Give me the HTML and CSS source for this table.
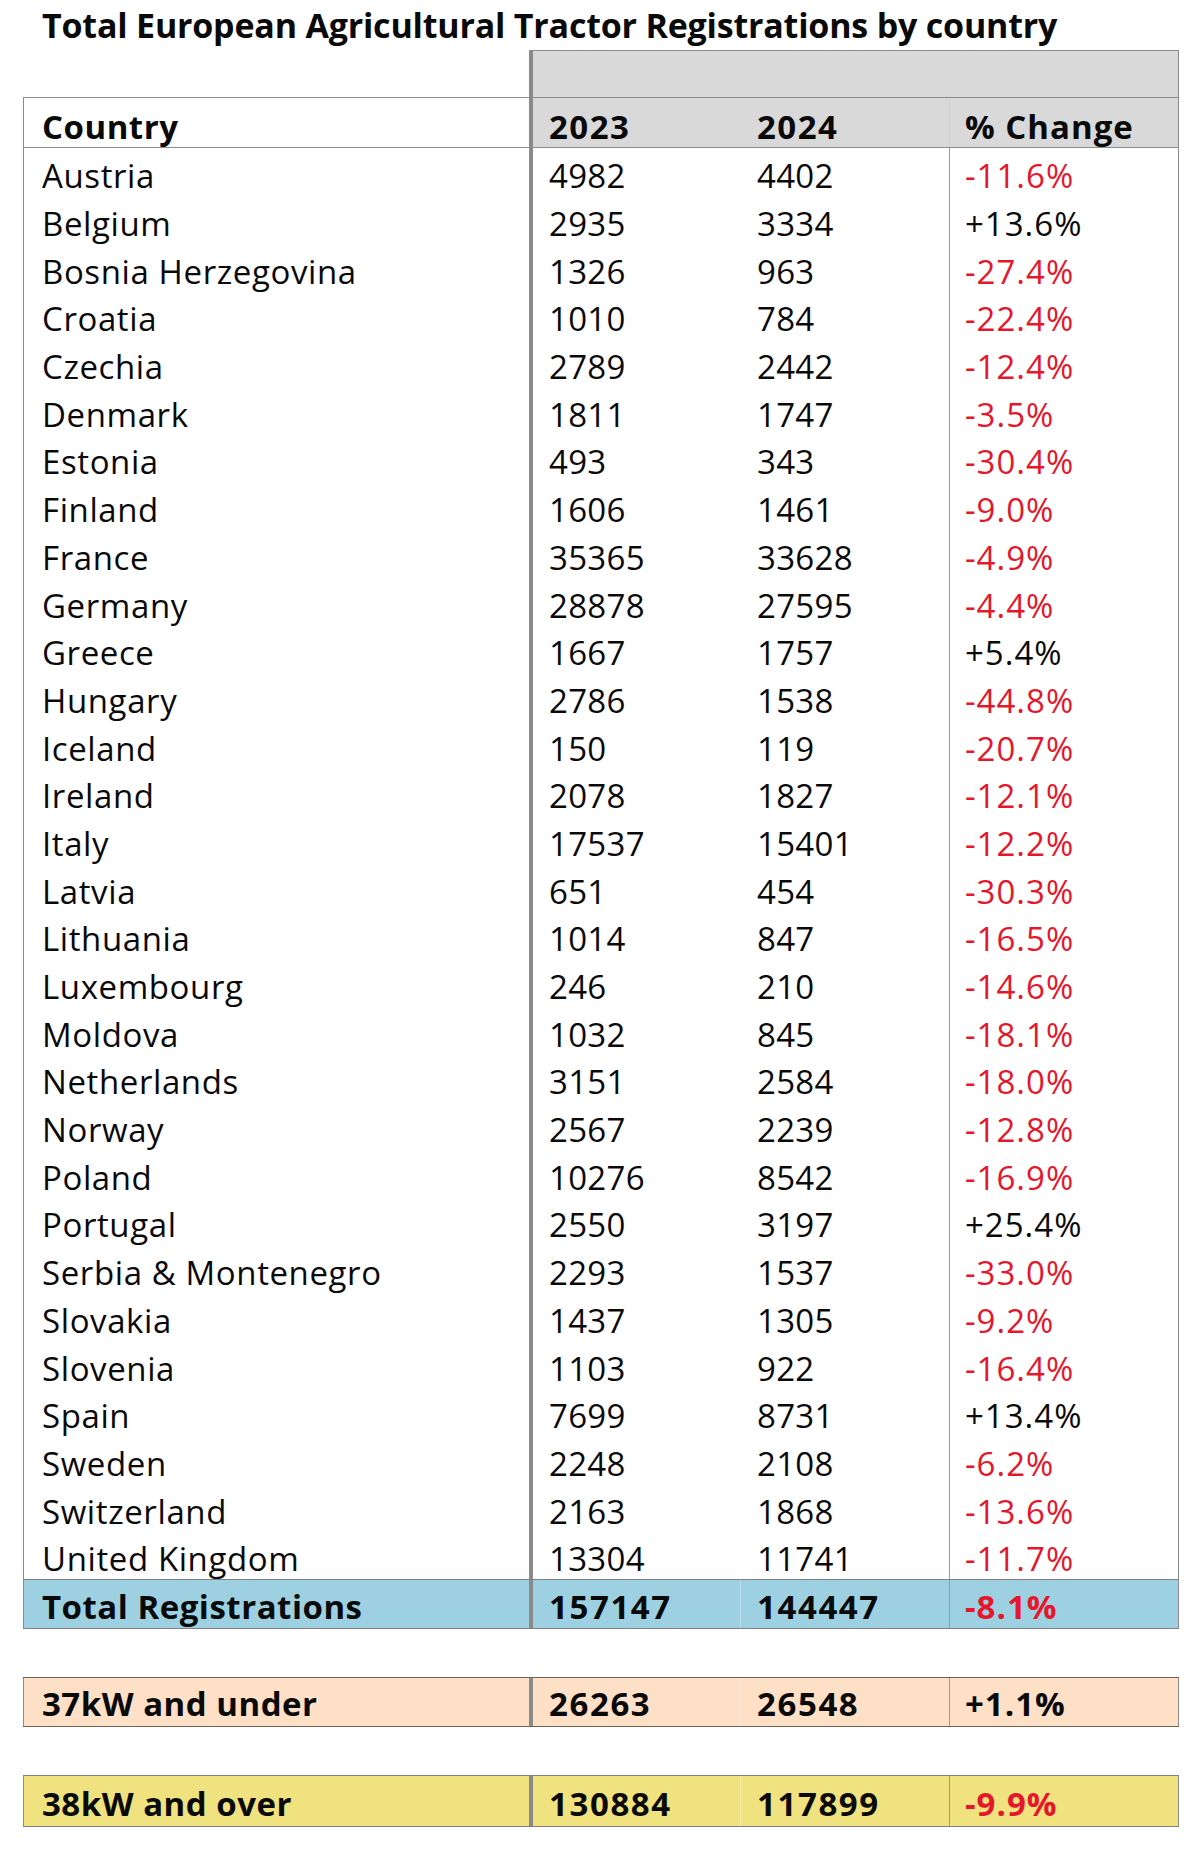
FILE: index.html
```html
<!DOCTYPE html>
<html lang="en">
<head>
<meta charset="utf-8">
<title>Total European Agricultural Tractor Registrations by country</title>
<link rel="stylesheet" href="styles.css">
</head>
<body>
<div class="page">
  <h1 class="title">Total European Agricultural Tractor Registrations by country</h1>
  <div class="table">
    <div class="row band">
      <div class="cell blank"></div>
      <div class="cell span3"></div>
    </div>
    <div class="row head">
      <div class="cell c1">Country</div>
      <div class="cell c2">2023</div>
      <div class="cell c3">2024</div>
      <div class="cell c4">% Change</div>
    </div>
    <div class="body">
      <div class="row data"><div class="cell c1">Austria</div><div class="cell c2">4982</div><div class="cell c3">4402</div><div class="cell c4 neg">-11.6%</div></div>
      <div class="row data"><div class="cell c1">Belgium</div><div class="cell c2">2935</div><div class="cell c3">3334</div><div class="cell c4">+13.6%</div></div>
      <div class="row data"><div class="cell c1">Bosnia Herzegovina</div><div class="cell c2">1326</div><div class="cell c3">963</div><div class="cell c4 neg">-27.4%</div></div>
      <div class="row data"><div class="cell c1">Croatia</div><div class="cell c2">1010</div><div class="cell c3">784</div><div class="cell c4 neg">-22.4%</div></div>
      <div class="row data"><div class="cell c1">Czechia</div><div class="cell c2">2789</div><div class="cell c3">2442</div><div class="cell c4 neg">-12.4%</div></div>
      <div class="row data"><div class="cell c1">Denmark</div><div class="cell c2">1811</div><div class="cell c3">1747</div><div class="cell c4 neg">-3.5%</div></div>
      <div class="row data"><div class="cell c1">Estonia</div><div class="cell c2">493</div><div class="cell c3">343</div><div class="cell c4 neg">-30.4%</div></div>
      <div class="row data"><div class="cell c1">Finland</div><div class="cell c2">1606</div><div class="cell c3">1461</div><div class="cell c4 neg">-9.0%</div></div>
      <div class="row data"><div class="cell c1">France</div><div class="cell c2">35365</div><div class="cell c3">33628</div><div class="cell c4 neg">-4.9%</div></div>
      <div class="row data"><div class="cell c1">Germany</div><div class="cell c2">28878</div><div class="cell c3">27595</div><div class="cell c4 neg">-4.4%</div></div>
      <div class="row data"><div class="cell c1">Greece</div><div class="cell c2">1667</div><div class="cell c3">1757</div><div class="cell c4">+5.4%</div></div>
      <div class="row data"><div class="cell c1">Hungary</div><div class="cell c2">2786</div><div class="cell c3">1538</div><div class="cell c4 neg">-44.8%</div></div>
      <div class="row data"><div class="cell c1">Iceland</div><div class="cell c2">150</div><div class="cell c3">119</div><div class="cell c4 neg">-20.7%</div></div>
      <div class="row data"><div class="cell c1">Ireland</div><div class="cell c2">2078</div><div class="cell c3">1827</div><div class="cell c4 neg">-12.1%</div></div>
      <div class="row data"><div class="cell c1">Italy</div><div class="cell c2">17537</div><div class="cell c3">15401</div><div class="cell c4 neg">-12.2%</div></div>
      <div class="row data"><div class="cell c1">Latvia</div><div class="cell c2">651</div><div class="cell c3">454</div><div class="cell c4 neg">-30.3%</div></div>
      <div class="row data"><div class="cell c1">Lithuania</div><div class="cell c2">1014</div><div class="cell c3">847</div><div class="cell c4 neg">-16.5%</div></div>
      <div class="row data"><div class="cell c1">Luxembourg</div><div class="cell c2">246</div><div class="cell c3">210</div><div class="cell c4 neg">-14.6%</div></div>
      <div class="row data"><div class="cell c1">Moldova</div><div class="cell c2">1032</div><div class="cell c3">845</div><div class="cell c4 neg">-18.1%</div></div>
      <div class="row data"><div class="cell c1">Netherlands</div><div class="cell c2">3151</div><div class="cell c3">2584</div><div class="cell c4 neg">-18.0%</div></div>
      <div class="row data"><div class="cell c1">Norway</div><div class="cell c2">2567</div><div class="cell c3">2239</div><div class="cell c4 neg">-12.8%</div></div>
      <div class="row data"><div class="cell c1">Poland</div><div class="cell c2">10276</div><div class="cell c3">8542</div><div class="cell c4 neg">-16.9%</div></div>
      <div class="row data"><div class="cell c1">Portugal</div><div class="cell c2">2550</div><div class="cell c3">3197</div><div class="cell c4">+25.4%</div></div>
      <div class="row data"><div class="cell c1">Serbia &amp; Montenegro</div><div class="cell c2">2293</div><div class="cell c3">1537</div><div class="cell c4 neg">-33.0%</div></div>
      <div class="row data"><div class="cell c1">Slovakia</div><div class="cell c2">1437</div><div class="cell c3">1305</div><div class="cell c4 neg">-9.2%</div></div>
      <div class="row data"><div class="cell c1">Slovenia</div><div class="cell c2">1103</div><div class="cell c3">922</div><div class="cell c4 neg">-16.4%</div></div>
      <div class="row data"><div class="cell c1">Spain</div><div class="cell c2">7699</div><div class="cell c3">8731</div><div class="cell c4">+13.4%</div></div>
      <div class="row data"><div class="cell c1">Sweden</div><div class="cell c2">2248</div><div class="cell c3">2108</div><div class="cell c4 neg">-6.2%</div></div>
      <div class="row data"><div class="cell c1">Switzerland</div><div class="cell c2">2163</div><div class="cell c3">1868</div><div class="cell c4 neg">-13.6%</div></div>
      <div class="row data"><div class="cell c1">United Kingdom</div><div class="cell c2">13304</div><div class="cell c3">11741</div><div class="cell c4 neg">-11.7%</div></div>
    </div>
    <div class="row sum total">
      <div class="cell c1">Total Registrations</div><div class="cell c2">157147</div><div class="cell c3">144447</div><div class="cell c4 neg">-8.1%</div>
    </div>
  </div>
  <div class="table single">
    <div class="row sum small">
      <div class="cell c1">37kW and under</div><div class="cell c2">26263</div><div class="cell c3">26548</div><div class="cell c4">+1.1%</div>
    </div>
  </div>
  <div class="table single">
    <div class="row sum large">
      <div class="cell c1">38kW and over</div><div class="cell c2">130884</div><div class="cell c3">117899</div><div class="cell c4 neg">-9.9%</div>
    </div>
  </div>
</div>
</body>
</html>
```
FILE: styles.css
```css
html, body {
  margin: 0;
  padding: 0;
  background: #ffffff;
}

body {
  font-family: "Open Sans", "Noto Sans", "Liberation Sans", sans-serif;
  color: #0a0a0a;
}

.page {
  width: 1156px;
  padding: 0 0 0 23px;
}

.title {
  margin: 0 0 0 19px;
  padding-top: 5px;
  font-size: 34px;
  font-weight: 700;
  line-height: 40px;
  height: 45px;
  letter-spacing: -0.2px;
  white-space: nowrap;
}

.row {
  display: grid;
  grid-template-columns: 506px 211px 209px 230px;
  box-sizing: border-box;
}

.cell {
  box-sizing: border-box;
  font-size: 33px;
  line-height: 1;
  display: flex;
  align-items: center;
  white-space: nowrap;
}

.c1 {
  border-left: 1px solid #8c8c8c;
  padding-left: 18px;
  letter-spacing: 0.6px;
}

.c2 {
  border-left: 4px solid #8a8a8a;
  padding-left: 16px;
  letter-spacing: 0.3px;
}

.c3 {
  padding-left: 17px;
  letter-spacing: 0.3px;
}

.c4 {
  border-left: 1px solid #9a9a9a;
  border-right: 1px solid #8c8c8c;
  padding-left: 15px;
  letter-spacing: 1px;
}

.neg {
  color: #e4172d;
}

/* grey band above the year headers */
.band {
  height: 47px;
}

.band .blank {
  border: none;
}

.band .span3 {
  grid-column: 2 / span 3;
  background: #d9d9d9;
  border-top: 1px solid #8c8c8c;
  border-left: 4px solid #8a8a8a;
  border-right: 1px solid #8c8c8c;
}

.head {
  height: 51px;
  border-top: 1px solid #8c8c8c;
  border-bottom: 1px solid #8c8c8c;
}

.head .cell {
  font-weight: 700;
  font-size: 33px;
  padding-top: 8px;
}

.head .c1 {
  letter-spacing: 0.5px;
}

.head .c2,
.head .c3 {
  letter-spacing: 1.5px;
}

.head .c4 {
  letter-spacing: 1px;
}

.head .c2,
.head .c3,
.head .c4 {
  background: #d9d9d9;
}

.head .c4 {
  border-left-color: #d0d0d0;
}

.body .row {
  height: 47.7px;
}

.body .cell {
  padding-top: 8px;
}

.sum {
  height: 50px;
  border-top: 1px solid #808080;
  border-bottom: 1px solid #808080;
}

.sum .cell {
  font-weight: 700;
  font-size: 33px;
  padding-top: 6px;
}

.sum .c1 {
  letter-spacing: 0.5px;
}

.sum .c2,
.sum .c3 {
  letter-spacing: 1.6px;
}

.sum .c4 {
  letter-spacing: 1px;
}

.sum .c3 {
  border-left: 1px solid rgba(255, 255, 255, 0.35);
  padding-left: 16px;
}

.total {
  background: #9dd1e2;
}

.single {
  margin-top: 48px;
}

.small {
  background: #fde0c6;
  border-color: #6e6259;
}

.small .cell {
  padding-top: 4px;
}

.large {
  background: #f0e27f;
  height: 52px;
}
```
